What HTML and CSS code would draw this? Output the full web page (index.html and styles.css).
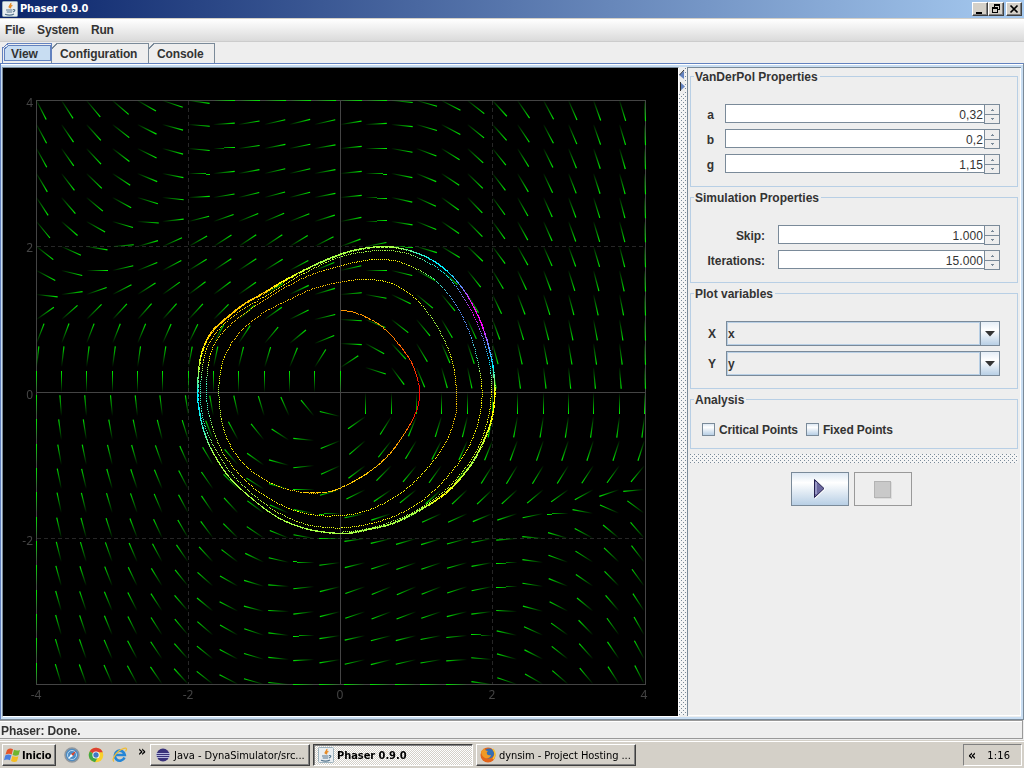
FILE: index.html
```html
<!DOCTYPE html>
<html lang="en">
<head>
<meta charset="utf-8">
<title>Phaser 0.9.0</title>
<link rel="stylesheet" href="styles.css">
</head>
<body>
<svg class="defs" width="0" height="0">
  <symbol id="java" viewBox="0 0 16 16"><rect x=".5" y=".5" width="15" height="15" rx="1" fill="#e9eef1" stroke="#9eb3be"/><path d="M8.800 2c1 2-3 2.600-1.300 5M10.400 4.300c-2 .8-2.600 1.700-1.300 3" fill="none" stroke="#e58a25" stroke-width="1.300"/><path d="M4 9h6.500M4.700 11h5.300M3 13.300c3 1 7 .8 9-.4M11 8.500c2.800-.2 2 2-.2 2.500" fill="none" stroke="#56758d" stroke-width="1.200"/></symbol>
</svg>
<div class="screen">
  <header class="titlebar">
    <svg class="i16"><use href="#java"/></svg>
    <span class="title">Phaser 0.9.0</span>
    <div class="winbtns">
      <span class="wb"><svg width="12" height="10"><path d="M2 8h6v2H2z"/></svg></span>
      <span class="wb"><svg width="12" height="10" shape-rendering="crispEdges"><path d="M4 0h6v2H4zM9 2h1v4H9zM4 2h1v1H4zM8 5h2v1H8zM2 3h6v2H2zM2 5h1v4H2zM7 5h1v4H7zM2 8h6v1H2z"/></svg></span>
      <span class="wb close"><svg width="12" height="10"><path d="M2.500 1.500l7 7M9.500 1.500l-7 7" stroke="#000" stroke-width="1.700"/></svg></span>
    </div>
  </header>
  <nav class="menu"><span>File</span><span>System</span><span>Run</span></nav>
  <div class="tabs">
    <svg width="216" height="21" shape-rendering="crispEdges">
      <path d="M4 19V6L8 3H50V19Z" fill="#c8ddf2"/>
      <path d="M2.500 21V6L8 1.500H51.500M4.500 19V7L8.500 3.500H50.500V18.500H4.500" fill="none" stroke="#6382bf"/>
      <path d="M51.500 21V7L57 1.500H148.500V21M148.500 7L154 1.500H214.500V21" fill="none" stroke="#7a8a99"/>
      <path d="M51.500 1V19" stroke="#6382bf"/>
    </svg>
    <span class="t1">View</span><span class="t2">Configuration</span><span class="t3">Console</span>
  </div>
  <main class="pane">
    <canvas id="plot" width="675" height="648"></canvas>
    <div class="divider"><svg width="6" height="26"><path d="M5 3v8L0 7zM1 14v9l5-4.500z" fill="#6382bf"/><path d="M5 2L.5 7M1.500 14v9" stroke="#333" fill="none"/></svg></div>
    <aside class="side">
      <section class="group g1"><h2>VanDerPol Properties</h2>
        <div class="row"><label>a</label><div class="spin"><span>0,32</span><i></i></div></div>
        <div class="row"><label>b</label><div class="spin"><span>0,2</span><i></i></div></div>
        <div class="row"><label>g</label><div class="spin"><span>1,15</span><i></i></div></div>
      </section>
      <section class="group g2"><h2>Simulation Properties</h2>
        <div class="row"><label>Skip:</label><div class="spin"><span>1.000</span><i></i></div></div>
        <div class="row"><label>Iterations:</label><div class="spin"><span>15.000</span><i></i></div></div>
      </section>
      <section class="group g3"><h2>Plot variables</h2>
        <div class="row"><label>X</label><div class="combo"><span>x</span><b><svg width="10" height="6"><path d="M0 0h10L5 5.500z" fill="#333"/></svg></b></div></div>
        <div class="row"><label>Y</label><div class="combo"><span>y</span><b><svg width="10" height="6"><path d="M0 0h10L5 5.500z" fill="#333"/></svg></b></div></div>
      </section>
      <section class="group g4"><h2>Analysis</h2>
        <div class="checks"><i></i><span>Critical Points</span><i></i><span>Fixed Points</span></div>
      </section>
      <div class="bumps"></div>
      <div class="buttons">
        <span class="play"><svg width="14" height="22"><path d="M2 2v19L12.500 11z" fill="#fff"/><path d="M1.500 1.500v18L11 10.500z" fill="#6a679f" stroke="#24214f"/><path d="M3 4v12" stroke="#a9a7d0" stroke-width="1.500"/></svg></span>
        <span class="stop"><b></b></span>
      </div>
    </aside>
  </main>
  <div class="status">Phaser: Done.</div>
  <footer class="taskbar">
    <div class="start"><svg width="17" height="16"><path d="M3 3q3-2.500 6-.8L7.700 7.500Q5 6 1.500 7.500z" fill="#e4562a"/><path d="M10 2.800q3 1.500 6 .2L14.600 8q-3 1.300-6-.1z" fill="#6fb52e"/><path d="M1.200 8.500q3-1.800 6.200-.2L6 13.300q-3-1.500-6 0z" fill="#4a7fe0"/><path d="M8.400 9q3 1.500 6 .2L13 14.300q-3 1.300-6-.3z" fill="#f5bd22"/></svg>Inicio</div>
    <div class="quick">
      <svg width="16" height="16"><circle cx="8" cy="8" r="7" fill="#4d8cc4" stroke="#8f979e" stroke-width="1.500"/><circle cx="8" cy="8" r="4.500" fill="none" stroke="#b9d8ef"/><path d="M12 4L7 7l2 2z" fill="#e04428"/><path d="M4 12l3-5 2 2z" fill="#fff"/></svg>
      <svg width="16" height="16"><circle cx="8" cy="8" r="7.300" fill="#f9d12b"/><path d="M8 8L1.700 4.400A7.300 7.300 0 0 1 14.800 5.200H8z" fill="#dc4034"/><path d="M8 8L1.700 4.400A7.300 7.300 0 0 0 7 15.200L10 10z" fill="#3fa64a"/><circle cx="8" cy="8" r="3.600" fill="#fff"/><circle cx="8" cy="8" r="2.700" fill="#3f77c5"/></svg>
      <svg width="16" height="16"><path d="M12.500 10.500A5 5 0 1 1 12.800 8H4" fill="none" stroke="#2586d6" stroke-width="2.600"/><path d="M2 14.500C-1 13 4 4 12 1.300c3-.8 3 1 1.500 3" fill="none" stroke="#efbd36" stroke-width="1.300"/></svg>
      <span>»</span>
    </div>
    <div class="task a"><svg width="16" height="16"><circle cx="8" cy="8" r="6.500" fill="#39327b"/><path d="M1 6.500h14M1 8.500h14M2 10.500h12" stroke="#c3c6e8" stroke-width=".9"/></svg><span>Java - DynaSimulator/src...</span></div>
    <div class="task b"><svg class="i16"><use href="#java"/></svg><span>Phaser 0.9.0</span></div>
    <div class="task c"><svg width="16" height="16"><circle cx="8" cy="8" r="7.500" fill="#e2651b"/><circle cx="9" cy="6.500" r="5" fill="#356fb5"/><path d="M1 4q2 0 3-3 1 3 4 3-2 1-1 3 1 2 4 1-1 4-6 3-4-2-4-7z" fill="#f09a25"/><path d="M13 2q4 5 0 10" fill="none" stroke="#f7c536" stroke-width="1.500"/></svg><span>dynsim - Project Hosting ...</span></div>
    <div class="tray"><b>«</b><span>1:16</span></div>
  </footer>
</div>
<script src="plot.js"></script>
</body>
</html>
```
FILE: styles.css
```css
* { box-sizing: border-box; }
body { margin: 0; background: #d4d0c8; overflow: hidden; font: bold 12px/14px "Liberation Sans", Arial, sans-serif; color: #333; }
svg { display: block; flex: none; }
.defs { position: absolute; }
.i16 { width: 16px; height: 16px; }
.screen { width: 1024px; height: 768px; display: flex; flex-direction: column; background: #eee; }
.titlebar { height: 19px; flex: none; display: flex; align-items: center; padding: 0 2px 1px; background: linear-gradient(90deg, #0a246a, #a6caf0); border-bottom: 1px solid #d4d0c8; }
.title { font: bold 11px/16px "DejaVu Sans Condensed", "DejaVu Sans", sans-serif; font-stretch: condensed; letter-spacing: -.15px; color: #fff; margin-left: 2px; padding-top: 1px; }
.winbtns { margin-left: auto; display: flex; }
.wb { width: 16px; height: 14px; padding: 1px; background: #d4d0c8; border: 1px solid; border-color: #fff #404040 #404040 #fff; box-shadow: inset -1px -1px #808080; }
.close { margin-left: 2px; }
.menu { height: 23px; flex: none; display: flex; gap: 12px; padding: 4px 5px 0; background: linear-gradient(#fff, #dadada); border-bottom: 1px solid #ccc; letter-spacing: -.15px; }
.tabs { height: 21px; flex: none; display: grid; grid-template-columns: 49px 97px 70px; }
.tabs > * { grid-row: 1; }
.tabs svg { grid-column: 1 / 4; }
.tabs span { padding-top: 5px; z-index: 1; letter-spacing: -.1px; }
.t1 { grid-column: 1; padding-left: 11px; }
.t2 { grid-column: 2; padding-left: 11px; }
.t3 { grid-column: 3; padding-left: 11px; }
.pane { height: 657px; flex: none; display: flex; border: 1px solid #6382bf; border-bottom-color: #7a8a99; border-right-color: #7a8a99; box-shadow: inset 0 1px #fff, inset 0 3px #c8ddf2, inset 1px 0 #c8ddf2, inset -2px 0 #c8ddf2, inset 0 -2px #c8ddf2; padding: 3px 2px 2px 1px; }
#plot { display: block; flex: none; width: 677px; height: 650px; border: solid #7a8a99; border-width: 1px 0 0 1px; border-bottom: 1px solid #fff; border-right: 1px solid #fff; }
.divider, .bumps { background-color: #f4f4f4; background-image: conic-gradient(at 1px 1px, transparent 75%, #7a8a99 0), conic-gradient(at 1px 1px, transparent 75%, #7a8a99 0); background-size: 4px 4px; }
.divider { width: 8px; flex: none; margin-top: 1px; margin-bottom: 2px; background-position: 2px 0, 4px 2px; }
.divider svg { background: #eee; }
.side { flex: 1; border: 1px solid #7a8a99; border-width: 1px 0 0 1px; padding: 8px 3px 0 2px; margin-bottom: 1px; box-shadow: inset -1px -1px #fff; }
.group { border: 1px solid #b8cfe5; }
.group h2 { font: inherit; margin: -8px 0 0 3px; padding: 1px 2px 0 1px; width: max-content; background: #eee; height: 14px; }
.row { display: flex; justify-content: flex-end; padding-right: 17px; }
.row label { text-align: right; }
.g1 { height: 111px; }
.g1 h2 + .row { margin-top: 21px; }
.g1 .row { height: 25px; }
.g1 label { margin: 4px 11px 0 0; }
.g2 { height: 86px; margin-top: 10px; }
.g2 h2 + .row { margin-top: 21px; }
.g2 .row { height: 25px; }
.g2 label { margin: 4px 13px 0 0; letter-spacing: -.05px; }
.g1 .spin { width: 275px; }
.g2 .spin { width: 222px; }
.spin { height: 20px; display: flex; }
.spin span { flex: 1; height: 19px; background: #fff; border: 1px solid #7a8a99; border-right: 0; text-align: right; font-weight: normal; line-height: 19px; padding: 1px 1px 0 0; letter-spacing: .1px; }
.spin i { width: 16px; height: 20px; border: 1px solid #7a8a99; background: linear-gradient(#7a8a99, #7a8a99) 0 9px / 100% 1px no-repeat, linear-gradient(#7a8a99, #7a8a99) 6px 5px / 3px 1px no-repeat, linear-gradient(#7a8a99, #7a8a99) 7px 4px / 1px 1px no-repeat, linear-gradient(#7a8a99, #7a8a99) 6px 13px / 3px 1px no-repeat, linear-gradient(#7a8a99, #7a8a99) 7px 14px / 1px 1px no-repeat, #eee; }
.g3 { height: 96px; margin-top: 10px; }
.g3 h2 + .row { margin-top: 21px; }
.g3 .row { height: 30px; }
.g3 label { margin: 6px 10px 0 0; width: 14px; }
.combo { width: 274px; height: 25px; border: 1px solid #7a8a99; display: flex; }
.combo span { flex: 1; border: 1px solid #b8cfe5; padding-top: 4px; padding-left: 0; }
.combo b { width: 19px; border-left: 1px solid #7a8a99; padding: 9px 0 0 4px; background: linear-gradient(#e4edf6, #fff 35%, #b8cfe5); }
.g4 { height: 50px; margin-top: 10px; }
.checks { display: flex; margin-top: 16px; padding-left: 11px; line-height: 15px; letter-spacing: -.12px; }
.checks i { width: 13px; height: 13px; margin: 1px 4px 0 0; border: 1px solid #7a8a99; background: linear-gradient(#dde8f3, #fff 30%, #b8cfe5); }
.checks span { margin-right: 8px; padding-top: 1px; }
.bumps { height: 9px; margin-top: 5px; background-position: 0 0, 2px 2px; }
.buttons { display: flex; justify-content: center; gap: 5px; margin-top: 9px; padding-right: 5px; }
.buttons span { width: 58px; height: 34px; border: 1px solid #7a8a99; display: flex; align-items: center; justify-content: center; }
.buttons .play { background: linear-gradient(#dde8f3, #fff 30%, #b8cfe5); }
.buttons .stop { border-color: #999; padding-right: 1px; }
.stop b { width: 17px; height: 17px; background: #c9c9c9; border: 1px solid #b3b3b3; box-shadow: 1px 1px #ddd; }
.status { height: 19px; flex: none; border: 1px solid #999; border-left: 0; margin-right: 1px; padding: 3px 1px; box-shadow: inset 0 1px #fff; letter-spacing: -.1px; }
.taskbar { flex: 1; display: flex; background: #d4d0c8; border-top: 1px solid #eee; box-shadow: inset 0 1px #d4d0c8, inset 0 2px #fff; padding: 4px 2px 2px; font: 11px/16px "DejaVu Sans Condensed", "DejaVu Sans", sans-serif; color: #000; }
.start, .task { height: 22px; background: #d4d0c8; border: 1px solid; border-color: #fff #404040 #404040 #fff; box-shadow: inset -1px -1px #808080; display: flex; padding: 2px; white-space: nowrap; }
.start { width: 54px; font-weight: bold; letter-spacing: -.1px; gap: 1px; padding-left: 1px; line-height: 17px; }
.quick { display: flex; width: 94px; gap: 8px; padding: 3px 0 0 8px; }
.quick span { font-weight: bold; font-size: 14px; line-height: 8px; margin-left: 2px; }
.task { width: 160px; margin-right: 3px; padding-left: 4px; gap: 3px; letter-spacing: 0; }
.task span { line-height: 17px; }
.task.a span { letter-spacing: -.03px; }
.task.c { padding-left: 3px; letter-spacing: -.05px; }
.task.b { border-color: #404040 #fff #fff #404040; box-shadow: inset 1px 1px #808080; background: repeating-conic-gradient(#fff 0 25%, #d4d0c8 0 50%) 0 0 / 2px 2px; font-weight: bold; letter-spacing: -.05px; }
.task.b span { line-height: 18px; }
.tray { margin-left: auto; width: 59px; height: 22px; border: 1px solid; border-color: #808080 #fff #fff #808080; padding: 2px 4px; display: flex; gap: 11px; letter-spacing: .15px; line-height: 17px; }
.tray b { font-size: 14px; line-height: 16px; }
```
FILE: plot.js
```javascript
const cv = document.getElementById('plot');
const c = cv.getContext('2d');
c.translate(-3, -68);
c.fillStyle = '#000';
c.fillRect(0, 0, 700, 740);

const px = (x, y, col) => { c.fillStyle = col; c.fillRect(Math.round(x), Math.round(y), 1, 1); };

// Grid and labels
c.fillStyle = '#262626';
for (const x of [188, 492]) for (let y = 101; y < 684; y += 7) c.fillRect(x, y, 1, Math.min(4, 684 - y));
for (const y of [246, 538]) for (let x = 37; x < 644; x += 7) c.fillRect(x, y, Math.min(4, 644 - x), 1);
c.strokeStyle = '#444';
c.strokeRect(36.5, 100.5, 609, 584);
c.fillStyle = '#444';
c.fillRect(340, 101, 1, 584);
c.fillRect(37, 392, 608, 1);
c.font = '12px "Noto Sans", sans-serif';
c.textAlign = 'center';
[['-4', 36], ['-2', 188], ['0', 340], ['2', 492], ['4', 644]].forEach(([t, x]) => c.fillText(t, x, 699));
c.textAlign = 'right';
[['4', 107], ['2', 252], ['0', 399], ['-2', 545]].forEach(([t, y]) => c.fillText(t, 33, y));

// Direction field: slope at x = 0 for each row, top to bottom
const rowSlope = [.15, .16, .1, .1, .1, .2, .37, .23, .08, -.06, -.05, .66, 0, -.24, .4, .45, .28, .03, 0, .13, .25, .25, .15, .16, .15];
for (let j = 0; j < 25; j++) for (let i = 0; i < 25; i++) {
  const x = (i - 12) / 3, y = (12 - j) / 3;
  let dx, dy;
  if (y === 0) { dx = 0; dy = x > 0 ? -1 : 1; }
  else { const s = rowSlope[j] + .96 * (-.2 * x * x - x / y); dx = Math.sign(y); dy = s * dx; }
  const n = 21.3 / Math.hypot(dx, dy);
  const x0 = Math.floor(36 + i * 25.36), y0 = Math.floor(100 + j * 24.34);
  const x1 = Math.max(36, Math.min(645, x0 + dx * n)), y1 = Math.max(100, Math.min(684, y0 - dy * n));
  const straight = Math.abs(x1 - x0) < 1 || Math.abs(y1 - y0) < 1;
  if (straight) {
    const steps = Math.max(1, Math.round(Math.max(Math.abs(x1 - x0), Math.abs(y1 - y0))));
    for (let k = 1; k <= steps; k++) {
      const t = k / steps;
      px(x0 + (x1 - x0) * t, y0 + (y1 - y0) * t, `rgba(0,235,0,${t})`);
    }
  } else {
    const g = c.createLinearGradient(x0, y0, x1, y1);
    g.addColorStop(0, 'rgba(0,235,0,0)');
    g.addColorStop(1, 'rgba(0,235,0,1)');
    c.strokeStyle = g;
    c.lineWidth = 1.15;
    c.beginPath();
    c.moveTo(x0 + .5, y0 + .5);
    c.lineTo(x1 + .5, y1 + .5);
    c.stroke();
  }
}

// Trajectory: "x,y[,colour]" in third-pixel units from (180,230)
const hues = { o: [255, 150, 0], r: [255, 0, 0], g: [255, 200, 0], y: [255, 255, 0], l: [165, 255, 70], t: [60, 240, 190], c: [0, 240, 255], b: [90, 150, 255], m: [255, 0, 255] };
const spiral = `480,241,o 515,245 560,262 610,293,o 650,335 690,390 710,440 718,487,r 708,545,r 670,615,o 620,680 560,730,g 480,774 430,787,g 370,787 300,770 240,740 190,700 150,645,y 125,575 116,487,l 122,420,y 140,365 180,305,g 250,248 330,207 400,175 480,156,g 540,148 590,150,y 640,162 700,200,y 745,250,l 790,325,l 818,400,y 829,487,g 825,560,g 795,640 745,710,y 680,775 610,820 540,847 480,856 415,856 340,840 250,795 180,735,y 130,670 100,600,l 82,530,t 79,460,t 88,385,y 110,330 160,275,g 230,225 310,175 390,135,g 480,107 560,90,y 610,88 660,96,y 720,122,l 770,155,t 825,220,b 865,300,b 890,380,t 904,460,y 904,520 890,590 860,660 810,730 740,800 660,850 580,878,y 500,892 440,892 370,880 290,845 215,790 150,725,l 105,655,l 75,590,t 62,520,t 62,460,t 72,380,y 95,325 150,265,g 230,213 310,165,y 390,120 480,80,l 560,64,l 620,60 680,70,l 740,95,t 790,128,c 835,180,b 880,255,m 910,330,b 930,410,c 933,487,y 925,560 895,650 850,720 790,785 710,840 620,880,l 540,900 480,906`;
const cycle = `52,487,c 55,420,l 65,365,y 90,310,g 130,270,g 190,222,g 250,188,g 310,152,y 400,105,l 480,72,l 540,56 600,49,l 650,52,l 710,68,t 760,92,c 800,122,c 840,165,b 875,220,m 905,285,m 925,350,b 938,410,c 943,487,y 935,560,y 915,620 880,690,l 830,755 780,800,y 720,838,l 640,878 560,898 500,909 440,906 370,893 290,860 215,805 150,745,l 100,670,l 70,600,t 55,530,c 52,487,c`;

function trace(src, gap, off) {
  const p = src.split(' ').map(s => { const a = s.split(','); return { x: 179.7 + a[0] / 3 + off, y: 229.7 + a[1] / 3 + off, h: a[2] && hues[a[2]] }; });
  let last = 0;
  p.forEach((q, i) => {
    if (!q.h) {
      let n = i; while (n < p.length && !p[n].h) n++;
      const B = n < p.length ? p[n].h : p[last].h, A = p[last].h, f = (i - last) / (n - last);
      q.col = A.map((v, k) => v + (B[k] - v) * f);
    } else { q.col = q.h; last = i; }
  });
  let acc = 0, lx = p[0].x, ly = p[0].y;
  for (let i = 0; i < p.length - 1; i++) {
    const a = p[i - 1] || p[i], b = p[i], d = p[i + 1], e = p[i + 2] || d;
    for (let t = 0; t < 1; t += .005) {
      const cr = k => .5 * (2 * b[k] + (d[k] - a[k]) * t + (2 * a[k] - 5 * b[k] + 4 * d[k] - e[k]) * t * t + (3 * b[k] - a[k] - 3 * d[k] + e[k]) * t ** 3);
      const x = cr('x'), y = cr('y');
      acc += Math.hypot(x - lx, y - ly); lx = x; ly = y;
      if (acc >= gap) { acc -= gap; px(x, y, `rgb(${b.col.map((v, k) => Math.round(v + (d.col[k] - v) * t))})`); }
    }
  }
}
trace(spiral.slice(0, spiral.indexOf(' 300,770')), 1.2, 0);
trace(spiral, 1.9, 0);
trace(cycle, .5, 0);
trace(cycle, 1.3, .6);
```
